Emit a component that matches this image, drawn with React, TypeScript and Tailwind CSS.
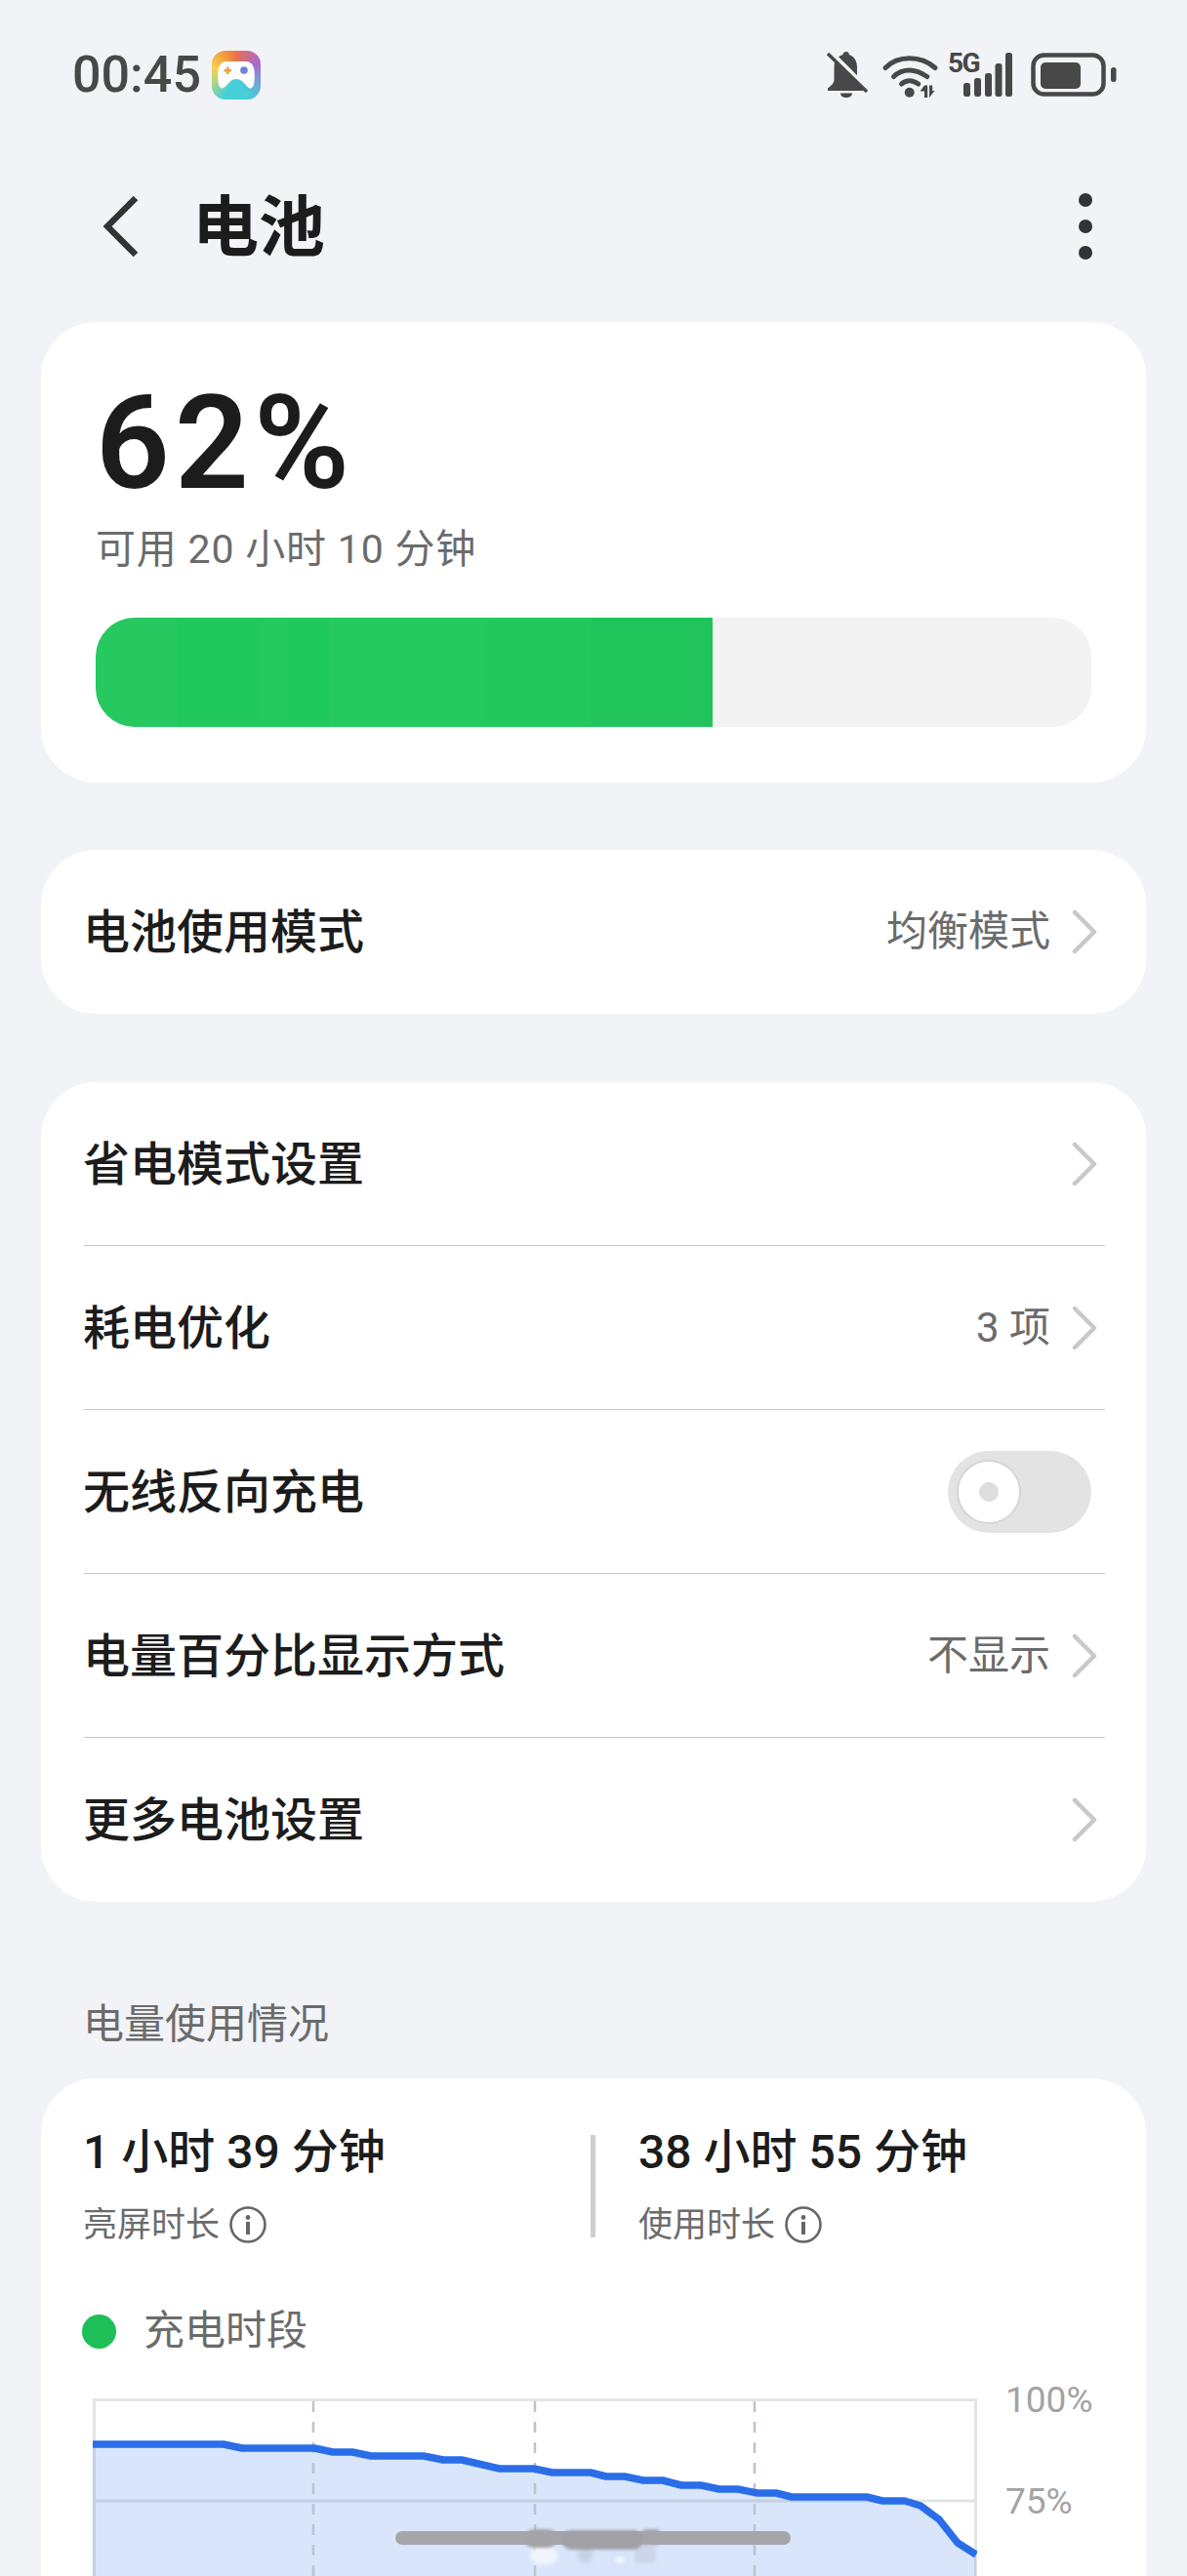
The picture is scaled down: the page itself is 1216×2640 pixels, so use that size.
import React from "react";

const Chevron = () => (
  <svg width="26" height="46" viewBox="0 0 26 46" fill="none" className="ml-[22px] shrink-0">
    <path d="M3 3 L23 23 L3 43" stroke="#c9c9c9" strokeWidth="4.5" strokeLinejoin="round" strokeLinecap="round" />
  </svg>
);

const Row = ({ label, value, last }: { label: string; value?: string; last?: boolean }) => (
  <div className="relative flex h-[168px] items-center pl-[43px] pr-[50px]">
    <span className="flex-1 pt-0.5 text-[48px] font-medium leading-none text-[#1c1c1c]">{label}</span>
    {value && <span className="text-[42px] leading-none text-[#6b6b6b]">{value}</span>}
    <Chevron />
    {!last && <div className="absolute bottom-0 left-11 right-[42px] h-px bg-[#c6c6c6]" />}
  </div>
);

const Info = () => (
  <svg width="40" height="40" viewBox="0 0 40 40" fill="none" className="ml-[9px]">
    <circle cx="20" cy="20" r="17.5" stroke="#666" strokeWidth="2.6" />
    <circle cx="20" cy="12.5" r="2.4" fill="#666" />
    <rect x="18" y="17" width="4" height="13" fill="#666" />
  </svg>
);

const Stat = ({ value, label }: { value: string; label: string }) => (
  <div>
    <div className="h-14 text-[48px] font-medium leading-[56px] text-[#1c1c1c]">{value}</div>
    <div className="mt-6 flex h-11 items-center text-[35px] leading-none text-[#6b6b6b]">
      {label}
      <Info />
    </div>
  </div>
);

const curve =
  "0,47 134,47 153,51 227,51 246,55 266,55 285,59 339,59 359,63 378,63 417,72 452,72 471,76 510,76 526,80 545,80 564,84 584,84 603,89 623,89 642,93 661,93 681,97 700,97 716,101 793,101 809,105 832,105 848,110 867,124 886,148 905,160";

const BatteryChart = () => (
  <svg width="906" height="200" viewBox="0 0 906 200" fill="none" className="shrink-0">
    <path d="M1.5 200 V1.5 H904.5 V200" stroke="#e4e4e4" strokeWidth="3" />
    <path d="M0 105 H905" stroke="#e4e4e4" strokeWidth="3" />
    <polygon points={`${curve} 905,200 0,200`} fill="#2a6de8" fillOpacity="0.18" />
    <path d="M226 3 V200 M453 3 V200 M678 3 V200" stroke="#bcc3ce" strokeWidth="2.5" strokeDasharray="11 10" />
    <polyline points={curve} stroke="#2a6de8" strokeWidth="7.5" strokeLinejoin="round" />
  </svg>
);

const StatusIcons = () => (
  <div className="flex items-center">
    {/* muted bell */}
    <svg width="44" height="50" viewBox="0 0 44 50" fill="none" className="ml-0.5">
      <path
        d="M21 1c-2 0-3.200 1.200-3.600 3C11 6 8.500 11 8.500 17v12c0 4-2 6-6.500 9.500V41h36v-2.500c-4-3-6-5.500-6-9.500V17c0-6-2.500-11-8-13-.5-1.800-1-3-3-3z"
        fill="#484848"
      />
      <path d="M15 43.500h12c0 3-2.500 4.500-6 4.500s-6-1.500-6-4.500z" fill="#484848" />
      <path d="M5 1 L45 41" stroke="#f1f3f7" strokeWidth="4" />
      <path d="M2 3 L42 42" stroke="#484848" strokeWidth="3.400" />
    </svg>
    {/* wifi */}
    <svg width="62" height="50" viewBox="0 0 62 50" fill="none" className="ml-2.5">
      <path d="M7 17.500C14 10.500 22 7.800 31.700 7.800S50 10.500 58 17.500" stroke="#484848" strokeWidth="5" strokeLinecap="round" />
      <path d="M15.500 26.500C20 22 25.500 20 31.700 20s11.500 2 18 6.500" stroke="#484848" strokeWidth="5" strokeLinecap="round" />
      <path d="M23.500 34c2.500-2 5-3.200 8.200-3.200s6 1.200 9 3.200" stroke="#484848" strokeWidth="5" strokeLinecap="round" />
      <circle cx="31.700" cy="42.700" r="5" fill="#484848" />
      <path d="M47 35.500v12.500h3.200V35.500zM47 35.500l-4.500 6h4.500z" fill="#484848" />
      <path d="M52 35.500v12.500l5.500-7h-2.300V35.500z" fill="#484848" />
    </svg>
    {/* 5G + signal */}
    <div className="relative ml-2.5 h-[46px] w-[68px]">
      <span className="absolute -left-px -top-1 text-[28px] font-bold leading-[30px] tracking-[-1.500px] text-[#484848]">
        5G
      </span>
      <svg width="68" height="46" viewBox="0 0 68 46" fill="#484848">
        <rect x="15" y="31" width="7" height="14" rx="2.500" />
        <rect x="26" y="26" width="7" height="19" rx="2.500" />
        <rect x="37" y="21" width="7" height="24" rx="2.500" />
        <rect x="47.500" y="11" width="7" height="34" rx="2.500" />
        <rect x="58" y="0" width="7" height="45" rx="2.500" />
      </svg>
    </div>
    {/* battery */}
    <svg width="88" height="46" viewBox="0 0 88 46" fill="none" className="ml-4">
      <rect x="2.500" y="2.500" width="72" height="40" rx="11" stroke="#484848" strokeWidth="4.500" />
      <rect x="10" y="10" width="41" height="27" rx="5" fill="#484848" />
      <rect x="82" y="15" width="5.500" height="15" rx="2.500" fill="#484848" />
    </svg>
  </div>
);

const GameIcon = () => (
  <div className="ml-[11px] flex h-[50px] w-[50px] items-center justify-center rounded-[14px] bg-[conic-gradient(from_0deg,#e9724a_0deg,#a96ace_60deg,#7c9ad8_100deg,#45cfd8_150deg,#45cfd8_210deg,#b8d67a_255deg,#f7cf4e_290deg,#f09a3c_330deg,#e9724a_360deg)]">
    <svg width="38" height="30" viewBox="0 0 38 30">
      <path
        d="M9 1h20c5 0 8 4 8.500 9 .5 6 .5 12-1 16-1 3-4 3-6 1-3-3-6-8-11.500-8S10.500 24 7.500 27c-2 2-5 2-6-1C0 22 0 16 .500 10 1 5 4 1 9 1z"
        fill="#fbfcfd"
      />
      <path d="M9 6.500h2.500V9H14v2.500h-2.500V14H9v-2.500H6.500V9H9z" fill="#eda23e" />
      <circle cx="27" cy="10" r="3.800" fill="#6d82d8" />
    </svg>
  </div>
);

export default function App() {
  return (
    <div className="relative h-[2640px] w-[1216px] overflow-hidden bg-[#f1f3f7] font-[Roboto,'Noto_Sans_CJK_SC',sans-serif]">
      <div className="flex h-[154px] items-center justify-between pl-[74px] pr-[72px]">
        <div className="flex items-center">
          <span className="text-[52px] font-medium leading-none text-[#484848]">00:45</span>
          <GameIcon />
        </div>
        <StatusIcons />
      </div>

      <div className="mb-5 flex h-[156px] items-center pl-[106px] pr-[97px]">
        <svg width="36" height="64" viewBox="0 0 36 64" fill="none">
          <path d="M33 3 L4 32 L33 61" stroke="#333" strokeWidth="6.500" />
        </svg>
        <span className="ml-[55px] flex-1 pt-1 text-[68px] font-bold leading-none text-[#1c1c1c]">电池</span>
        <div className="flex flex-col gap-[13px]">
          <div className="h-3.5 w-3.5 rounded-full bg-[#333]" />
          <div className="h-3.5 w-3.5 rounded-full bg-[#333]" />
          <div className="h-3.5 w-3.5 rounded-full bg-[#333]" />
        </div>
      </div>

      <div className="flex flex-col px-[42px]">
        <div className="h-[472px] rounded-[56px] bg-white px-14 pt-[55px]">
          <div className="h-[140px] text-[133px] font-semibold leading-[140px] tracking-[5px] text-[#1c1c1c]">62%</div>
          <div className="mt-[13px] h-[50px] text-[41px] leading-[50px] tracking-[0.8px] text-[#6b6b6b]">可用 20 小时 10 分钟</div>
          <div className="mt-[45px] h-28 overflow-hidden rounded-[40px] bg-[#f3f3f3]">
            <div className="h-full w-[632px] bg-[linear-gradient(90deg,#26c85f_0_84px,#21c95c_84px_169px,#24c95d_169px_198px,#20c95b_198px_240px,#25ca5e_240px_398px,#22c85c_398px_508px,#20c45a_508px)]" />
          </div>
        </div>

        <div className="mt-[69px] rounded-[56px] bg-white">
          <Row label="电池使用模式" value="均衡模式" last />
        </div>

        <div className="mt-[70px] rounded-[56px] bg-white">
          <Row label="省电模式设置" />
          <Row label="耗电优化" value="3 项" />
          <div className="relative flex h-[168px] items-center pl-[43px] pr-14">
            <span className="flex-1 pt-0.5 text-[48px] font-medium leading-none text-[#1c1c1c]">无线反向充电</span>
            <div className="flex h-[84px] w-[147px] items-center rounded-full bg-[#e3e3e3] pl-[9px]">
              <div className="flex h-[66px] w-[66px] items-center justify-center rounded-full border-2 border-[#d6d6d6] bg-white">
                <div className="h-5 w-5 rounded-full bg-[#dedede]" />
              </div>
            </div>
            <div className="absolute bottom-0 left-11 right-[42px] h-px bg-[#c6c6c6]" />
          </div>
          <Row label="电量百分比显示方式" value="不显示" />
          <Row label="更多电池设置" last />
        </div>

        <div className="mb-[35px] mt-[106px] h-10 pl-[43px] text-[42px] leading-10 text-[#6b6b6b]">电量使用情况</div>

        <div className="h-[600px] rounded-[56px] bg-white pl-[43px] pt-12">
          <div className="flex items-center">
            <div className="w-[520px]">
              <Stat value="1 小时 39 分钟" label="亮屏时长" />
            </div>
            <div className="h-[105px] w-[5px] bg-[#cfcfcf]" />
            <div className="ml-[44px]">
              <Stat value="38 小时 55 分钟" label="使用时长" />
            </div>
          </div>

          <div className="mt-[62px] flex h-[50px] items-center">
            <div className="ml-[-1px] h-[35px] w-[35px] rounded-full bg-[#1fbf57]" />
            <span className="ml-[28px] text-[42px] leading-none text-[#6b6b6b]">充电时段</span>
          </div>

          <div className="mt-[44px] flex items-start pl-2.5">
            <BatteryChart />
            <div className="-mt-[18px] ml-[29px] text-[37px] leading-10 text-[#a3a3a3]">
              <div className="h-10">100%</div>
              <div className="mt-[64px] h-10">75%</div>
            </div>
          </div>
        </div>
      </div>

      {/* gesture bar and the smudged watermark over it */}
      <div className="absolute left-[405px] top-[2594px] h-3.5 w-[405px] rounded-full bg-[#a5a6a8]" />
      <div className="absolute left-[543px] top-[2610px] h-[18px] w-[28px] rounded-full bg-[#f2f6fc] blur-[2px]" />
      <div className="absolute left-[592px] top-[2605px] h-[22px] w-[15px] rounded-full bg-[#c5d2e6] blur-[2px]" />
      <div className="absolute left-[630px] top-[2620px] h-[7px] w-2.5 rounded-full bg-[#eef3fb] blur-[1px]" />
      <div className="absolute left-[650px] top-[2608px] h-[19px] w-[22px] rounded bg-[#cbd7e8] blur-[1.500px]" />
      <div className="absolute left-[537px] top-[2592px] h-[19px] w-[34px] rounded-xl bg-[#a3a4a7] blur-[1.500px]" />
      <div className="absolute left-[575px] top-[2593px] h-[20px] w-[84px] rounded-xl bg-[#a0a1a4] blur-[1.500px]" />
      <div className="absolute left-[658px] top-[2592px] h-4 w-[18px] rounded bg-[#a4a5a8] blur-[1.500px]" />
    </div>
  );
}
